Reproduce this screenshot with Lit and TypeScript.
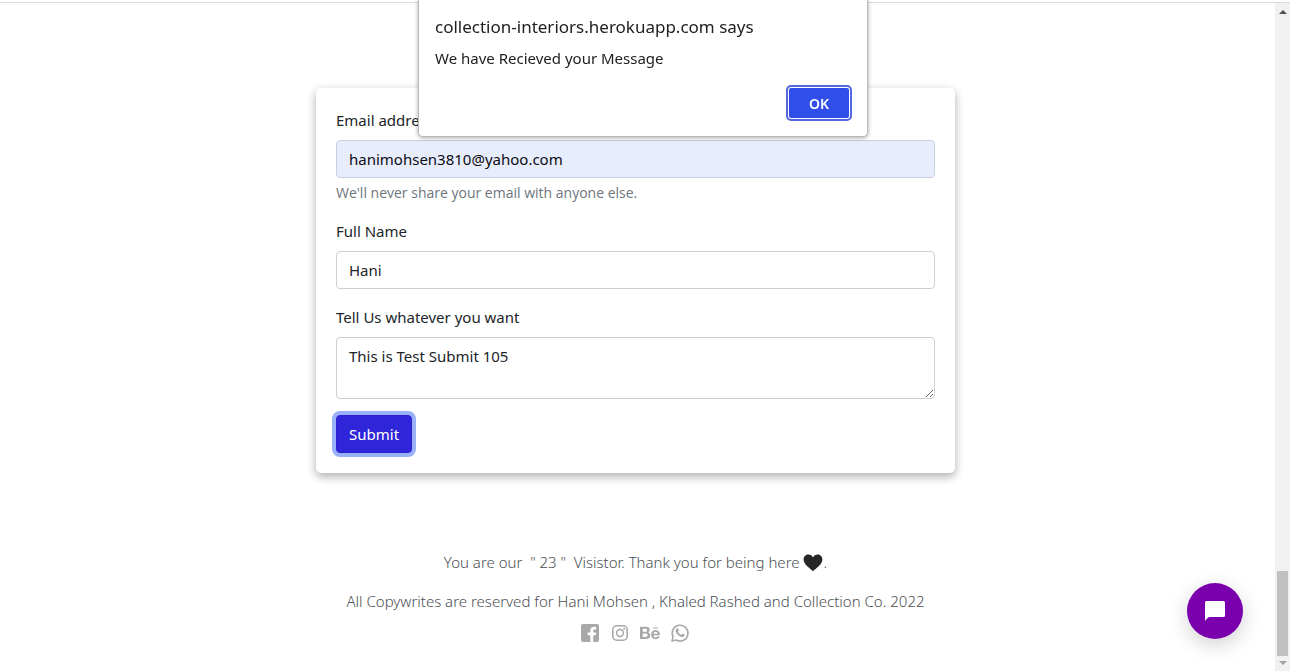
import { LitElement, html, css } from "lit";
import { customElement, state } from "lit/decorators.js";

@customElement("contact-form")
class ContactForm extends LitElement {
  static styles = css`
    :host {
      display: block;
      width: 100%;
      max-width: 639px;
    }
    * {
      box-sizing: border-box;
    }
    .card {
      padding: 20px;
      border-radius: 5px;
      background: #fff;
      box-shadow: 0 4px 8px rgba(0, 0, 0, 0.2), 0 3px 12px rgba(0, 0, 0, 0.14);
    }
    .field {
      display: flex;
      flex-direction: column;
      margin-bottom: 16px;
    }
    .label {
      margin-bottom: 8px;
      line-height: 24px;
    }
    .control {
      display: block;
      width: 100%;
      height: 38px;
      margin: 0;
      padding: 6px 12px;
      border: 1px solid #cdcfd2;
      border-radius: 4px;
      background: #fff;
      color: #212529;
      font: inherit;
      line-height: 24px;
      outline: none;
    }
    .filled {
      background: #e8edfe;
      border-color: #c9cfdf;
      color: #0b0b12;
    }
    .area {
      height: 62px;
      resize: vertical;
    }
    .hint {
      margin-top: 4px;
      color: #6c757d;
      font-family: "Open Sans", "Noto Sans", sans-serif;
      font-size: 14px;
      line-height: 21px;
    }
    .submit {
      display: block;
      height: 38px;
      padding: 6px 12px;
      border: 1px solid #2d22cd;
      border-radius: 4px;
      background: #2f26d9;
      color: #fff;
      font: inherit;
      line-height: 24px;
      box-shadow: 0 0 0 4px #98b1f8;
      cursor: pointer;
    }
  `;

  render() {
    return html`
      <form class="card" @submit=${(e: Event) => e.preventDefault()}>
        <div class="field">
          <label class="label" for="email">Email address</label>
          <input class="control filled" id="email" type="email" value="hanimohsen3810@yahoo.com" aria-describedby="hint" />
          <div class="hint" id="hint">We'll never share your email with anyone else.</div>
        </div>
        <div class="field">
          <label class="label" for="name">Full Name</label>
          <input class="control" id="name" type="text" value="Hani" />
        </div>
        <div class="field">
          <label class="label" for="message">Tell Us whatever you want</label>
          <textarea class="control area" id="message" .value=${"This is Test Submit 105"}></textarea>
        </div>
        <button class="submit" type="submit">Submit</button>
      </form>
    `;
  }
}

@customElement("site-footer")
class SiteFooter extends LitElement {
  static styles = css`
    :host {
      display: block;
      color: #4c4f53;
      font-size: 15px;
      font-weight: 300;
      line-height: 24px;
      text-align: center;
    }
    .line {
      margin: 0 0 15px;
      white-space: pre-wrap;
    }
    .heart {
      width: 20px;
      height: 18px;
      vertical-align: -4px;
    }
    .social {
      display: flex;
      justify-content: center;
      gap: 10px;
      margin-top: -5px;
    }
    .link {
      display: flex;
      color: #a8a8a8;
    }
    .icon {
      width: 20px;
      height: 20px;
      fill: currentColor;
    }
    .brand {
      fill: none;
      stroke: currentColor;
    }
  `;

  render() {
    return html`
      <p class="line">You are our  " 23 "  Visistor. Thank you for being here <svg class="heart" viewBox="0 0 20 18" role="img" aria-label="black heart"><path fill="#262626" d="M10 17.2C7.2 14.6 0.600 10.6 0.600 5.6 0.600 2.600 2.800 0.600 5.400 0.600 7.400 0.600 9.200 1.800 10 3.600 10.800 1.800 12.600 0.600 14.600 0.600 17.200 0.600 19.400 2.600 19.400 5.600 19.400 10.600 12.800 14.600 10 17.200Z"/></svg>.</p>
      <p class="line">All Copywrites are reserved for Hani Mohsen , Khaled Rashed and Collection Co. 2022</p>
      <nav class="social">
        <a class="link" href="#facebook" aria-label="Facebook">
          <svg class="icon" viewBox="0 0 20 20"><path d="M3 1H17A2 2 0 0 1 19 3V17A2 2 0 0 1 17 19H13.300V12.300H15.700L16.100 9.500H13.300V7.800C13.300 6.900 13.800 6.400 14.800 6.400H16.200V4C15.600 3.900 14.900 3.800 14.100 3.800 11.700 3.800 10.300 5.200 10.300 7.500V9.500H7.700V12.300H10.300V19H3A2 2 0 0 1 1 17V3A2 2 0 0 1 3 1Z"/></svg>
        </a>
        <a class="link" href="#instagram" aria-label="Instagram">
          <svg class="icon brand" viewBox="0 0 20 20"><rect x="2.800" y="2.800" width="14.400" height="14.400" rx="4" stroke-width="1.600"/><circle cx="10" cy="10" r="3.400" stroke-width="1.500"/><circle cx="14.200" cy="5.800" r="1" fill="currentColor" stroke="none"/></svg>
        </a>
        <a class="link" href="#behance" aria-label="Behance">
          <svg class="icon" viewBox="0 0 576 512"><path d="M232 237.200c31.800-15.200 48.400-38.200 48.400-74 0-70.600-52.600-87.800-113.300-87.800H0v354.400h171.800c64.400 0 124.900-30.900 124.900-102.900 0-44.500-21.100-77.400-64.700-89.700zM77.900 135.900H151c28.100 0 53.400 7.900 53.400 40.500 0 30.100-19.700 42.200-47.500 42.200h-79v-82.700zm83.300 233.700H77.900V272h84.900c34.300 0 56 14.300 56 50.600 0 35.800-25.900 47-57.600 47zm358.500-240.700H376V94h143.700v34.900zM576 305.200c0-75.900-44.400-139.200-124.900-139.200-78.200 0-131.300 58.800-131.300 135.800 0 79.900 50.300 134.700 131.300 134.700 61.300 0 101-27.600 120.100-86.300H509c-6.700 21.900-34.300 33.500-55.700 33.500-41.300 0-63-24.200-63-65.300h185.100c.3-4.200.6-8.700.6-13.200zM390.400 274c2.300-33.700 24.700-54.800 58.500-54.800 35.400 0 53.200 20.800 56.200 54.800H390.400z"/></svg>
        </a>
        <a class="link" href="#whatsapp" aria-label="WhatsApp">
          <svg class="icon brand" viewBox="0 0 20 20"><path stroke-width="1.500" stroke-linejoin="round" d="M1.900 18.100 3.100 13.800A7.900 7.900 0 1 1 6.200 17Z"/><path fill="currentColor" stroke="none" d="M6.800 5.600C7.300 5.100 7.900 5.200 8.100 5.700L8.800 7.300C9 7.800 8.300 8.400 8 8.800 8.800 10.200 9.700 11.100 11.300 11.800 11.800 11.400 12.200 10.500 12.700 10.700L14.400 11.500C14.900 11.800 14.600 12.800 14.200 13.300 12.800 14.700 10.500 13.800 8.700 12.400 6.900 10.900 5 8.600 5.800 6.900 6 6.300 6.400 5.900 6.800 5.600Z"/></svg>
        </a>
      </nav>
    `;
  }
}

@customElement("alert-dialog")
class AlertDialog extends LitElement {
  static styles = css`
    :host {
      display: block;
    }
    .box {
      box-sizing: border-box;
      display: flex;
      flex-direction: column;
      padding: 15px 16px 17px;
      border: 1px solid #b9b9b9;
      border-top: 0;
      border-radius: 0 0 5px 5px;
      background: #fff;
      color: #202124;
      box-shadow: 0 1px 4px rgba(0, 0, 0, 0.35);
    }
    .title {
      margin: 0 0 8px;
      font-size: 17px;
      font-weight: 400;
      line-height: 24px;
    }
    .text {
      margin: 0 0 18px;
      line-height: 22px;
    }
    .ok {
      align-self: flex-end;
      width: 62px;
      height: 32px;
      margin: 0 1px;
      padding: 0;
      border: 1px solid #fff;
      border-radius: 3px;
      outline: 2px solid #5468e0;
      outline-offset: 0;
      background: #304fea;
      color: #fff;
      font: inherit;
      font-size: 14px;
      font-weight: 600;
      cursor: pointer;
    }
  `;

  render() {
    return html`
      <div class="box" role="alertdialog" aria-labelledby="title" aria-describedby="text">
        <h2 class="title" id="title">collection-interiors.herokuapp.com says</h2>
        <p class="text" id="text">We have Recieved your Message</p>
        <button class="ok" type="button" @click=${() => this.dispatchEvent(new CustomEvent("dismiss"))}>OK</button>
      </div>
    `;
  }
}

@customElement("app-root")
class AppRoot extends LitElement {
  @state() private alertOpen = true;

  static styles = css`
    :host {
      display: grid;
      grid-template-columns: minmax(0, 1fr) 15px;
      min-height: 100vh;
      background: #fff;
      color: #212529;
      font-family: "Noto Sans", sans-serif;
      font-size: 15px;
    }
    .page {
      display: flex;
      flex-direction: column;
      align-items: center;
      gap: 77px;
      padding: 85px 4px 0 0;
      margin-top: 2px;
      border-top: 1px solid #dcdcdc;
    }
    .track {
      display: flex;
      flex-direction: column;
      align-items: center;
      justify-content: space-between;
      margin-top: 2px;
      padding: 7px 0 6px;
      border-top: 1px solid #dcdcdc;
      background: #f1f1f1;
    }
    .lower {
      display: flex;
      flex-direction: column;
      align-items: center;
      gap: 5px;
    }
    .thumb {
      width: 11px;
      height: 85px;
      background: #c1c1c1;
    }
    .arrow {
      display: block;
      width: 8px;
      height: 4px;
      fill: #505050;
    }
    .down {
      fill: #a3a3a3;
    }
    .alert {
      position: fixed;
      top: 0;
      left: calc(50% - 2px);
      width: 450px;
      max-width: 100%;
      transform: translateX(-50%);
    }
    .chat {
      position: fixed;
      right: 47px;
      bottom: 32px;
      display: grid;
      place-items: center;
      width: 56px;
      height: 56px;
      padding: 0;
      border: 0;
      border-radius: 50%;
      background: #7b00ad;
      box-shadow: 0 6px 20px rgba(0, 0, 0, 0.18);
      cursor: pointer;
    }
    .bubble {
      width: 20px;
      height: 20px;
      fill: #fff;
    }
  `;

  render() {
    return html`
      <main class="page">
        <contact-form></contact-form>
        <site-footer></site-footer>
      </main>
      <div class="track" aria-hidden="true">
        <svg class="arrow" viewBox="0 0 8 4"><path d="M0 4 4 0 8 4Z"/></svg>
        <div class="lower">
          <div class="thumb"></div>
          <svg class="arrow down" viewBox="0 0 8 4"><path d="M0 0 4 4 8 0Z"/></svg>
        </div>
      </div>
      <button class="chat" type="button" aria-label="Open chat">
        <svg class="bubble" viewBox="0 0 20 20"><path d="M1.500 0H18.500A1.500 1.500 0 0 1 20 1.500V14.500A1.500 1.500 0 0 1 18.500 16H5C3 16 1.500 18 0 20V1.500A1.500 1.500 0 0 1 1.500 0Z"/></svg>
      </button>
      ${this.alertOpen
        ? html`<alert-dialog class="alert" @dismiss=${() => (this.alertOpen = false)}></alert-dialog>`
        : null}
    `;
  }
}
